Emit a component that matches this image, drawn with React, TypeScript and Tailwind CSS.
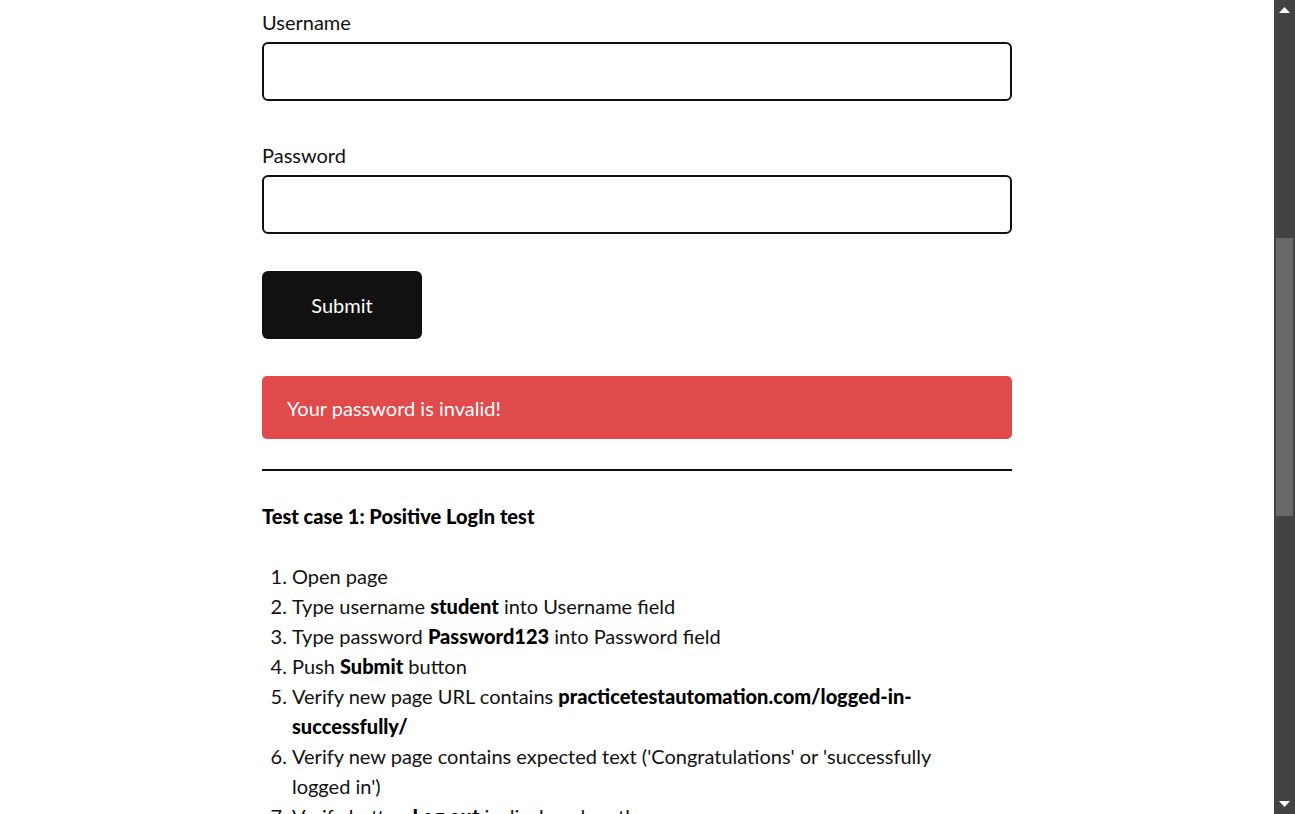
import React from 'react';

const Field: React.FC<{ label: string; type?: string }> = ({ label, type = 'text' }) => (
  <div>
    <label className="block text-[20px] leading-[27px]">{label}</label>
    <input
      type={type}
      className="mt-[6px] block h-[59px] w-full rounded-[6px] border-2 border-[#111] bg-white px-3 outline-none"
    />
  </div>
);

const steps: React.ReactNode[] = [
  <>Open page</>,
  <>Type username <b>student</b> into Username field</>,
  <>Type password <b>Password123</b> into Password field</>,
  <>Push <b>Submit</b> button</>,
  <>Verify new page URL contains <b>practicetestautomation.com/logged-in-successfully/</b></>,
  <>Verify new page contains expected text ('Congratulations' or 'successfully logged in')</>,
  <>Verify button <b>Log out</b> is displayed on the new page</>,
];

const App: React.FC = () => {
  return (
    <div className="flex h-[814px] w-[1295px] overflow-hidden bg-white font-['Lato','Liberation_Sans',sans-serif] text-[#111]">
      {/* Page */}
      <div className="flex-1 overflow-hidden">
        <div className="mx-auto w-[750px] pt-[9px]">
          <Field label="Username" />
          <div className="mt-[41px]">
            <Field label="Password" type="password" />
          </div>

          <button className="mt-[37px] h-[68px] w-[160px] rounded-[6px] bg-[#111] text-[20px] text-white">
            Submit
          </button>

          <div className="mt-[37px] flex h-[63px] items-center rounded-[5px] bg-[#e14a4a] px-[25px] text-[20px] text-white">
            Your password is invalid!
          </div>

          <hr className="mt-[30px] border-t-2 border-[#111]" />

          <h5 className="mt-[32px] text-[20px] font-black leading-[27px] text-black">Test case 1: Positive LogIn test</h5>

          <ol className="mt-[31px] w-[700px] list-decimal pl-[30px] text-[20px] leading-[30px] [&_b]:font-black [&_b]:text-black">
            {steps.map((s, i) => (
              <li key={i}>{s}</li>
            ))}
          </ol>
        </div>
      </div>

      {/* Scrollbar */}
      <div className="flex w-[21px] flex-col items-center bg-[#424242]">
        <div className="flex h-[20px] items-center justify-center">
          <svg width="11" height="6" viewBox="0 0 11 6"><path d="M5.5 0L11 6H0z" fill="#fff" /></svg>
        </div>
        <div className="relative w-full flex-1">
          <div className="absolute left-[2px] right-[2px] top-[218px] h-[278px] bg-[#686868]" />
        </div>
        <div className="flex h-[20px] items-center justify-center">
          <svg width="11" height="6" viewBox="0 0 11 6"><path d="M0 0H11L5.5 6z" fill="#fff" /></svg>
        </div>
      </div>
    </div>
  );
};

export default App;
